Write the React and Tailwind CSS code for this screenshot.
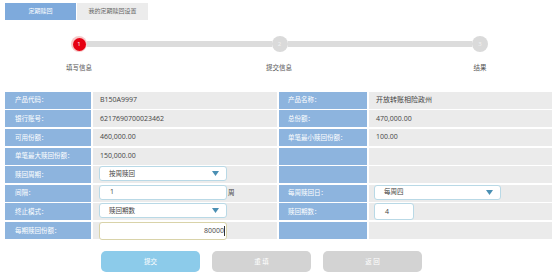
import React from "react";

const font = { fontFamily: '"Open Sans", "Noto Sans CJK SC", sans-serif' };

function Caret() {
  return (
    <svg width="7" height="5" viewBox="0 0 7 5" className="mr-[7px]">
      <path d="M0 0 L7 0 L3.5 5 Z" fill="#4a8fb3" />
    </svg>
  );
}

function Label({ children, right }) {
  return (
    <div
      className={`bg-[#8db4de] text-white text-[6.5px] flex items-center ${
        right ? "pl-[9px]" : "pl-[10px]"
      }`}
    >
      {children}
    </div>
  );
}

function Value({ children }) {
  return (
    <div className="bg-[#ebebeb] text-[#444] text-[7px] flex items-center pl-[7px]">
      {children}
    </div>
  );
}

function Step({ n, active }) {
  return active ? (
    <div className="w-[16px] h-[16px] rounded-full bg-[#f6c9c9] flex items-center justify-center shrink-0">
      <div className="w-[13px] h-[13px] rounded-full bg-[#e60012] text-white text-[6px] flex items-center justify-center">
        {n}
      </div>
    </div>
  ) : (
    <div className="w-[16px] h-[16px] rounded-full bg-[#dadada] text-[#f2f2f2] text-[6px] flex items-center justify-center shrink-0">
      {n}
    </div>
  );
}

export default function App() {
  return (
    <div className="w-[556px] h-[278px] bg-white overflow-hidden" style={font}>
      <div className="flex pt-[3px] pl-[5px]">
        <div className="w-[71px] h-[17px] bg-[#7eaadc] text-white text-[6px] flex items-center justify-center">
          定期赎回
        </div>
        <div className="w-[71px] h-[17px] bg-[#ececec] text-[#666] text-[6px] flex items-center justify-center ml-[1px]">
          我的定期赎回设置
        </div>
      </div>

      <div className="flex items-center ml-[71px] w-[417px] mt-[16px]">
        <Step n="1" active />
        <div className="flex-1 h-[6px] bg-[#dcdcdc]" />
        <Step n="2" />
        <div className="flex-1 h-[6px] bg-[#dcdcdc]" />
        <Step n="3" />
      </div>

      <div className="flex ml-[49px] mt-[11px] text-[6.5px] text-[#555]">
        <div className="w-[60px] text-center">填写信息</div>
        <div className="w-[60px] text-center ml-[140px]">提交信息</div>
        <div className="w-[60px] text-center ml-[141px]">结果</div>
      </div>

      <div className="ml-[5px] mt-[19px] grid grid-cols-[86px_184px_88px_183px] auto-rows-[17px] gap-x-[2px] gap-y-[1.6px]">
        <Label>产品代码：</Label>
        <Value>B150A9997</Value>
        <Label right>产品名称：</Label>
        <Value>开放转账相险政州</Value>

        <Label>银行账号：</Label>
        <Value>6217690700023462</Value>
        <Label right>总份额：</Label>
        <Value>470,000.00</Value>

        <Label>可用份额：</Label>
        <Value>460,000.00</Value>
        <Label right>单笔最小赎回份额：</Label>
        <Value>100.00</Value>

        <Label>单笔最大赎回份额：</Label>
        <Value>150,000.00</Value>
        <Label right></Label>
        <Value></Value>

        <Label>赎回周期：</Label>
        <div className="bg-[#ebebeb] pl-[6px] flex items-start">
          <div className="w-[128px] h-[15px] bg-white border border-[#b9d9e6] rounded-[3px] flex items-center justify-between text-[6.5px] text-[#444]">
            <span className="pl-[9px]">按周赎回</span>
            <Caret />
          </div>
        </div>
        <Label right></Label>
        <Value></Value>

        <Label>间隔：</Label>
        <div className="bg-[#ebebeb] pl-[6px] flex items-start">
          <div className="w-[128px] h-[15px] bg-white border border-[#b9d9e6] rounded-[3px] flex items-center text-[7px] text-[#444] pl-[10px]">
            1
          </div>
          <span className="text-[6.5px] text-[#444] ml-[1px] mt-[3px]">周</span>
        </div>
        <Label right>每周赎回日：</Label>
        <div className="bg-[#ebebeb] pl-[5px] flex items-start">
          <div className="w-[127px] h-[15px] bg-white border border-[#b9d9e6] rounded-[3px] flex items-center justify-between text-[6.5px] text-[#444]">
            <span className="pl-[9px]">每周四</span>
            <Caret />
          </div>
        </div>

        <Label>终止模式：</Label>
        <div className="bg-[#ebebeb] pl-[6px] flex items-start">
          <div className="w-[128px] h-[15px] bg-white border border-[#b9d9e6] rounded-[3px] flex items-center justify-between text-[6.5px] text-[#444]">
            <span className="pl-[9px]">赎回期数</span>
            <Caret />
          </div>
        </div>
        <Label right>赎回期数：</Label>
        <div className="bg-[#ebebeb] pl-[5px] flex items-start">
          <div className="w-[40px] h-[17px] bg-white border border-[#b9d9e6] rounded-[3px] flex items-center text-[7px] text-[#444] pl-[10px]">
            4
          </div>
        </div>

        <Label>每期赎回份额：</Label>
        <div className="bg-[#ebebeb] pl-[6px] flex items-start">
          <div className="w-[128px] h-[18px] bg-white border border-[#d9d3a9] rounded-[3px] flex items-center justify-end text-[7px] text-[#444] pr-[1px]">
            80000
            <span className="w-[1px] h-[10px] bg-[#333]" />
          </div>
        </div>
        <Label right></Label>
        <Value></Value>
      </div>

      <div className="flex ml-[101px] mt-[12px] gap-[12px]">
        <div className="w-[99px] h-[21px] rounded-[5px] bg-[#8ccbea] text-white text-[6.5px] flex items-center justify-center">
          提交
        </div>
        <div className="w-[99px] h-[21px] rounded-[5px] bg-[#d3d3d3] text-white text-[6.5px] flex items-center justify-center">
          重 填
        </div>
        <div className="w-[99px] h-[21px] rounded-[5px] bg-[#d3d3d3] text-white text-[6.5px] flex items-center justify-center">
          返 回
        </div>
      </div>
    </div>
  );
}
